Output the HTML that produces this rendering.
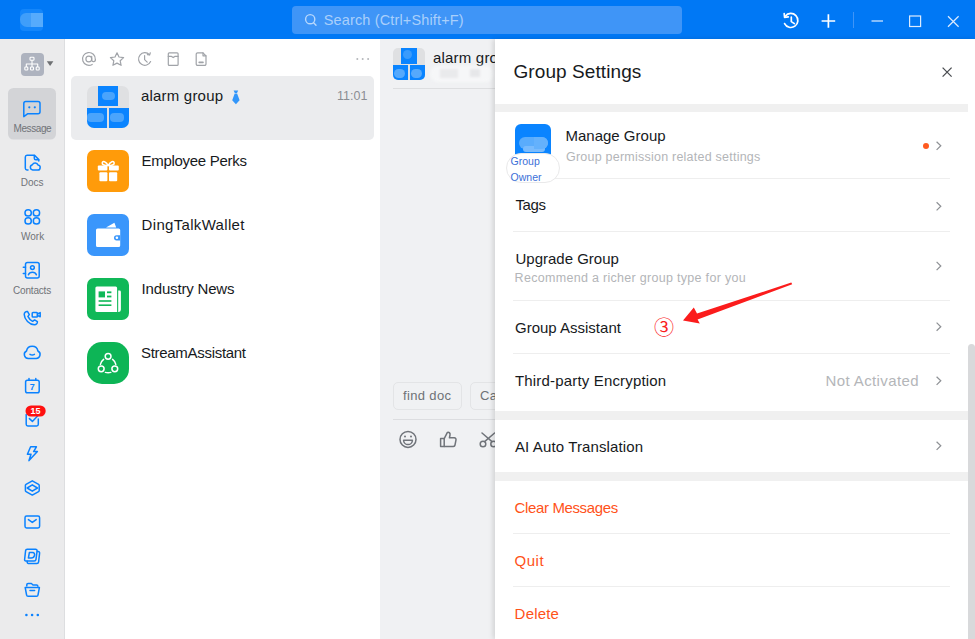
<!DOCTYPE html>
<html><head><meta charset="utf-8">
<style>
*{box-sizing:border-box;margin:0;padding:0}
html,body{width:975px;height:639px;overflow:hidden;background:#fff;font-family:"Liberation Sans","Noto Sans CJK SC",sans-serif;color:#171a1d}
.abs{position:absolute}
.t{position:absolute;white-space:nowrap;line-height:20px}
svg{position:absolute;overflow:visible}
#top{left:0;top:0;width:975px;height:39px;background:#0078f5}
#search{left:292px;top:6px;width:390px;height:28px;background:#3f95f7;border-radius:4px}
#side{left:0;top:39px;width:65px;height:600px;background:#ebebec;border-right:1px solid #dddee0}
#list{left:65px;top:39px;width:315px;height:600px;background:#fff}
#chat{left:380px;top:39px;width:115px;height:600px;background:#f0f1f3}
#drawer{left:495px;top:39px;width:480px;height:600px;background:#fff;box-shadow:-2px 0 5px rgba(0,0,0,.13)}
.nl{font-size:10px;color:#707378;line-height:12px}
.conv{font-size:15px;color:#171a1d}
.row{font-size:15px;color:#171a1d}
.sub{font-size:12.5px;color:#b3b5b8}
.div{left:513px;width:437px;height:1px;background:#eeeeee}
.band{left:495px;width:473px;background:#f0f0f0}
.red{color:#ff5219}
.av{position:absolute;left:87px;width:42px;height:42px;border-radius:7px}
.chev{stroke:#8e9195;stroke-width:1.2;fill:none}
.ic{stroke:#0a82ff;stroke-width:1.5;fill:none;stroke-linecap:round;stroke-linejoin:round}
.gi{stroke:#a0a3a8;stroke-width:1.2;fill:none;stroke-linecap:round;stroke-linejoin:round}
.ci{stroke:#70747a;stroke-width:1.5;fill:none;stroke-linecap:round;stroke-linejoin:round}
</style></head><body>
<div class="abs" id="top"></div>
<div class="abs" id="search"></div>
<div class="t" id="tsearch" style="left:323.7px;top:10px;font-size:14.5px;color:#a9cffb;letter-spacing:0.15px">Search (Ctrl+Shift+F)</div>
<div class="abs" id="side"></div>
<div class="abs" id="list"></div>
<div class="abs" id="chat"></div>
<!-- top bar icons -->
<div class="abs" style="left:20px;top:9px;width:23px;height:22px;border-radius:4px;background:#1486fa;overflow:hidden">
  <div class="abs" style="left:0;top:3.5px;width:23px;height:14px;border-radius:6px 0 0 7px;background:#3f9efa"></div>
  <div class="abs" style="left:11px;top:3.5px;width:12px;height:14px;background:#56abfc"></div>
</div>
<svg width="975" height="39" style="left:0;top:0" viewBox="0 0 975 39">
  <g stroke="#b9d8fc" fill="none" stroke-width="1.4" stroke-linecap="round">
    <circle cx="310.2" cy="19.2" r="4.6"/><path d="M313.6 22.8 L316 25.3"/>
  </g>
  <g stroke="#ffffff" fill="none" stroke-width="1.7" stroke-linecap="round" stroke-linejoin="round">
    <path d="M785.3 16.2 A7 7 0 1 1 784.6 23.6"/>
    <path d="M784.2 13.6 L784.6 17.3 L788.3 16.9"/>
    <path d="M791.3 17.2 V21.6 L794.4 23.6"/>
  </g>
  <g stroke="#ffffff" fill="none" stroke-width="1.7" stroke-linecap="butt">
    <path d="M821.6 21 H835.2 M828.4 14.3 V27.8"/>
  </g>
  <path d="M853.5 12 V28" stroke="#3f95f7" stroke-width="1"/>
  <g stroke="#dcebfe" fill="none" stroke-width="1.2">
    <path d="M871.5 21 H883"/>
    <rect x="909.6" y="16" width="11" height="10.5"/>
    <path d="M948 16.3 L958.6 26.7 M958.6 16.3 L948 26.7"/>
  </g>
</svg>

<!-- sidebar -->
<div class="abs" style="left:20.5px;top:52.8px;width:23px;height:23px;border-radius:4px;background:#aeb3bf"></div>
<svg width="65" height="600" style="left:0;top:39px" viewBox="0 39 65 600">
  <g stroke="#fff" fill="none" stroke-width="1.1" stroke-linejoin="round">
    <rect x="30" y="57.3" width="4" height="3" rx=".8"/>
    <path d="M32 60.3 V64 M26.3 67 V64 H37.7 V67 M32 64 V67"/>
    <rect x="24.8" y="67" width="3" height="3" rx=".8"/><rect x="30.5" y="67" width="3" height="3" rx=".8"/><rect x="36.2" y="67" width="3" height="3" rx=".8"/>
  </g>
  <path d="M46.8 61.3 H53.4 L50.1 66 Z" fill="#6e7073"/>
  <rect x="8" y="88" width="48" height="51.5" rx="5.5" fill="#d3d4d7"/>
  <!-- message -->
  <g class="ic">
    <path d="M25.8 101.6 H38 A2 2 0 0 1 40 103.6 V111.8 A2 2 0 0 1 38 113.8 H27.5 L23.8 116.6 V103.6 A2 2 0 0 1 25.8 101.6 Z"/>
  </g>
  <circle cx="29.3" cy="107.3" r="1.1" fill="#0a82ff"/><circle cx="34.8" cy="107.3" r="1.1" fill="#0a82ff"/>
  <!-- docs -->
  <g class="ic">
    <path d="M28 170 H27 A1.8 1.8 0 0 1 25.3 168.3 V157 A1.8 1.8 0 0 1 27 155.3 H34.5 L38.8 159.6 V161"/>
    <path d="M34.3 155.6 V158.2 A1.5 1.5 0 0 0 35.8 159.7 H38.6"/>
    <path d="M32.8 170 A2.7 2.7 0 0 1 32.4 164.7 A3 3 0 0 1 38 165 A2.5 2.5 0 0 1 37.3 170 Z"/>
  </g>
  <!-- work -->
  <g class="ic">
    <rect x="25" y="209.7" width="6.3" height="6.3" rx="3.1"/><rect x="33.3" y="209.7" width="6.3" height="6.3" rx="3.1"/>
    <rect x="25" y="217.8" width="6.3" height="6.3" rx="3.1"/><rect x="33.3" y="217.8" width="6.3" height="6.3" rx="3.1"/>
  </g>
  <!-- contacts -->
  <g class="ic">
    <rect x="25.5" y="262.5" width="13.7" height="15.5" rx="2"/>
    <path d="M23.3 267.2 H25.5 M23.3 273.4 H25.5"/>
    <circle cx="32.4" cy="267.6" r="1.9"/>
    <path d="M28.4 274.8 A4.2 3.6 0 0 1 36.4 274.8"/>
  </g>
  <!-- phone/video -->
  <g class="ic">
    <path d="M27.6 311.6 C26 311.2 24.2 312.4 24.2 314.4 C24.4 319.6 29.4 324.6 34.4 324.8 C36.4 324.8 37.6 323.2 37.4 321.6 L34.6 319.9 L32.6 321.3 C30.8 320.4 28.8 318.4 27.9 316.4 L29.3 314.6 Z"/>
    <rect x="32.2" y="312.4" width="5.2" height="4.6" rx=".8"/>
    <path d="M37.4 314 L40.2 312.6 V316.8 L37.4 315.4"/>
  </g>
  <!-- cloud face -->
  <g class="ic">
    <path d="M28.2 358.4 A3.9 3.9 0 0 1 26.5 351 A5.8 5.8 0 0 1 37.9 351 A3.9 3.9 0 0 1 36.2 358.4 Z"/>
    <path d="M30 354.3 Q32.2 355.6 34.4 354.3"/>
  </g>
  <!-- calendar -->
  <g class="ic">
    <rect x="25.6" y="380.2" width="13.6" height="12.6" rx="1.8"/>
    <path d="M29 378.6 V380.2 M35.8 378.6 V380.2"/>
  </g>
  <!-- todo -->
  <g class="ic">
    <path d="M38.3 419 V424.3 A1.6 1.6 0 0 1 36.7 425.9 H27.8 A1.6 1.6 0 0 1 26.2 424.3 V414.4"/>
    <path d="M29.4 418.6 L32.4 421.4 L38 415.6"/>
  </g>
  <!-- lightning -->
  <g class="ic">
    <path d="M30.6 446.8 H36.4 L33.6 451.6 H37.4 L29 460.6 L31 454.3 H27.4 Z"/>
  </g>
  <!-- hexagon -->
  <g class="ic">
    <path d="M32.3 480.8 L38.6 484.3 A1.2 1.2 0 0 1 39.2 485.3 V490.6 A1.2 1.2 0 0 1 38.6 491.6 L32.3 495.1 L26 491.6 A1.2 1.2 0 0 1 25.4 490.6 V485.3 A1.2 1.2 0 0 1 26 484.3 Z"/>
    <path d="M32.3 484.8 L37.4 488 L32.3 491.2 L27.2 488 Z"/>
  </g>
  <!-- mail -->
  <g class="ic">
    <rect x="25" y="516.1" width="14.6" height="11.8" rx="1.6"/>
    <path d="M28.4 519.6 L32.3 522.4 L36.2 519.6"/>
  </g>
  <!-- D -->
  <g class="ic" stroke-width="1.3">
    <path d="M27.2 549.2 H35.6 A1.5 1.5 0 0 1 37.1 550.9 L36 559.4 A1.8 1.8 0 0 1 34.2 561 H25.8 A1.3 1.3 0 0 1 24.6 559.5 L25.6 550.7 A1.7 1.7 0 0 1 27.2 549.2 Z"/>
    <path d="M37.4 551.6 H38.2 A1.4 1.4 0 0 1 39.6 553.2 L38.6 561.8 A1.8 1.8 0 0 1 36.8 563.4 H28.4 A1.3 1.3 0 0 1 27.2 562 V561.2"/>
    <path d="M29.4 552.4 H32.4 C34.6 552.4 34.8 554.2 34.5 555.4 C34.1 557.2 33 558 31.2 558 H28.4 Z"/>
  </g>
  <!-- folder -->
  <g class="ic">
    <path d="M26.8 586 V584.8 A1.3 1.3 0 0 1 28.1 583.5 H31.4 L33 585 H36.6 A1.3 1.3 0 0 1 37.9 586.2"/>
    <path d="M25.2 587.6 H39.4 L38 595 A1.5 1.5 0 0 1 36.5 596.3 H28.1 A1.5 1.5 0 0 1 26.6 595 Z"/>
    <path d="M30 590.6 H34.6"/>
  </g>
  <g fill="#0a82ff"><circle cx="26.4" cy="615" r="1.3"/><circle cx="32.1" cy="615" r="1.3"/><circle cx="37.8" cy="615" r="1.3"/></g>
  <rect x="25.5" y="405.5" width="20.2" height="11" rx="5.5" fill="#ff1010"/>
</svg>
<div class="t nl" id="n1" style="left:13.5px;top:122.5px;letter-spacing:-0.4px">Message</div>
<div class="t nl" id="n2" style="left:20.8px;top:176.5px">Docs</div>
<div class="t nl" id="n3" style="left:21px;top:230.5px">Work</div>
<div class="t nl" id="n4" style="left:13.1px;top:284.5px;letter-spacing:-0.2px">Contacts</div>
<div class="t" id="n7" style="left:29.7px;top:380.5px;font-size:9px;font-weight:bold;color:#0a82ff;line-height:12px">7</div>
<div class="t" id="n15" style="left:30.5px;top:405px;font-size:9px;font-weight:bold;color:#fff;line-height:12px">15</div>

<!-- conversation list -->
<svg width="315" height="40" style="left:65px;top:39px" viewBox="65 39 315 40">
  <g class="gi">
    <!-- @ -->
    <circle cx="88.8" cy="59" r="2.9"/>
    <path d="M91.7 56.3 V60.2 A1.7 1.7 0 0 0 95.3 59.4 A6.4 6.4 0 1 0 92.2 64.4"/>
    <!-- star -->
    <path d="M117 52.8 L119 57 L123.6 57.6 L120.2 60.8 L121.1 65.3 L117 63.1 L112.9 65.3 L113.8 60.8 L110.4 57.6 L115 57 Z"/>
    <!-- clock -->
    <path d="M149.4 54.6 A6.3 6.3 0 1 0 150.6 61.6"/>
    <path d="M150.3 52.8 L149.6 55 L147.4 54.6"/>
    <path d="M144.6 55.6 V59.6 L147.2 62.2"/>
    <!-- archive -->
    <rect x="168.3" y="52.8" width="9.8" height="12.6" rx="1"/>
    <path d="M168.3 56.4 H171.6 L173.2 57.6 L174.8 56.4 H178.1"/>
    <!-- file -->
    <path d="M197.6 52.8 H203 L206 55.8 V64 A1.4 1.4 0 0 1 204.6 65.4 H197.6 A1.4 1.4 0 0 1 196.2 64 V54.2 A1.4 1.4 0 0 1 197.6 52.8 Z"/>
    <path d="M203 52.8 V55.8 H206"/>
    <path d="M199.2 62.4 H203" stroke-width="1.6"/>
  </g>
  <g fill="#b4b6ba"><circle cx="357.3" cy="59" r="1"/><circle cx="362.7" cy="59" r="1"/><circle cx="368.1" cy="59" r="1"/></g>
</svg>
<div class="abs" style="left:71px;top:76px;width:303px;height:64px;background:#ebecee;border-radius:5px"></div>
<!-- avatars -->
<div class="av" style="top:86px;background:#dfe0e2;overflow:hidden">
  <div class="abs" style="left:10.8px;top:0;width:20.5px;height:20.3px;background:#0a84ff"></div>
  <div class="abs" style="left:0;top:21.7px;width:20.2px;height:20.3px;background:#0a84ff"></div>
  <div class="abs" style="left:21.7px;top:21.7px;width:20.3px;height:20.3px;background:#0a84ff"></div>
  <div class="abs" style="left:14.5px;top:5.5px;width:13.5px;height:8.5px;border-radius:4px;background:#4aa4fc"></div>
  <div class="abs" style="left:0;top:27px;width:17px;height:9px;border-radius:4px;background:#4aa4fc"></div>
  <div class="abs" style="left:23px;top:27px;width:14px;height:9px;border-radius:4px;background:#4aa4fc"></div>
</div>
<div class="av" style="top:150px;background:#ff9b0a"></div>
<div class="av" style="top:214px;background:#3a96fb"></div>
<div class="av" style="top:278px;background:#10b858"></div>
<div class="av" style="top:342px;background:#0db556;border-radius:15px"></div>
<svg width="42" height="300" style="left:87px;top:150px" viewBox="87 150 42 300">
  <!-- gift -->
  <g fill="#fff">
    <rect x="97.8" y="165.6" width="9.6" height="5" rx="1"/><rect x="109" y="165.6" width="9.8" height="5" rx="1"/>
    <rect x="99.4" y="172.2" width="8" height="9" rx="1"/><rect x="109" y="172.2" width="8.2" height="9" rx="1"/>
  </g>
  <g fill="none" stroke="#fff" stroke-width="1.5" stroke-linecap="round">
    <path d="M108.2 165.6 C106 161 102.6 160.6 102.2 163 C102 165 105 165.6 108.2 165.6 C111.4 165.6 114.4 165 114.2 163 C113.8 160.6 110.4 161 108.2 165.6"/>
  </g>
  <!-- wallet -->
  <g fill="#fff">
    <path d="M106 227.6 L114.4 222.8 L116.2 227.6 Z"/>
    <path d="M97.6 228.4 H118.6 A1.6 1.6 0 0 1 120.2 230 V245.4 A1.6 1.6 0 0 1 118.6 247 H97.6 A1.6 1.6 0 0 1 96 245.4 V230 A1.6 1.6 0 0 1 97.6 228.4 Z"/>
  </g>
  <path d="M120.2 235.2 H116.6 A2.6 2.6 0 0 0 116.6 240.4 H120.2 Z" fill="#3a96fb"/>
  <circle cx="116.9" cy="237.8" r="1.3" fill="#fff"/>
  <!-- news -->
  <g fill="#fff">
    <path d="M96.9 286.6 H115.6 A1.5 1.5 0 0 1 117.1 288.1 V311.9 H96.9 A1.5 1.5 0 0 1 95.4 310.4 V288.1 A1.5 1.5 0 0 1 96.9 286.6 Z"/>
    <path d="M118.2 290.6 H119.6 A1.3 1.3 0 0 1 120.9 291.9 V309.6 A2.3 2.3 0 0 1 118.2 311.9 Z"/>
  </g>
  <g fill="#10b858">
    <rect x="98.6" y="291.4" width="6.4" height="6" />
    <rect x="107" y="291.4" width="4.4" height="1.8"/><rect x="107" y="295.6" width="4.4" height="1.8"/>
    <rect x="98.6" y="300.2" width="12.8" height="1.6"/><rect x="98.6" y="304.4" width="12.8" height="1.6"/>
  </g>
  <!-- stream -->
  <g fill="none" stroke="#fff" stroke-width="1.5" stroke-linecap="round">
    <circle cx="108.1" cy="356.3" r="2.9"/><circle cx="101.2" cy="368.8" r="2.9"/><circle cx="114.8" cy="368.8" r="2.9"/>
    <path d="M103.6 359.4 A8.6 8.6 0 0 0 100.4 364.4"/>
    <path d="M112.6 359.4 A8.6 8.6 0 0 1 115.8 364.4"/>
    <path d="M105.4 372.4 A8.6 8.6 0 0 0 110.8 372.4"/>
  </g>
</svg>
<div class="t conv" id="c1" style="left:141px;top:86.2px;letter-spacing:0.2px">alarm group</div>
<svg width="10" height="15" style="left:231px;top:90px" viewBox="231 90 10 15">
  <path d="M233.6 90.4 H238.2 L237 93 H234.8 Z M234.7 93.6 H237.1 L239.6 100.2 L235.9 104.2 L232.2 100.2 Z" fill="#3296fa"/>
</svg>
<div class="t conv" id="c2" style="left:141.6px;top:150.5px;letter-spacing:-0.3px">Employee Perks</div>
<div class="t conv" id="c3" style="left:141.6px;top:214.7px;letter-spacing:0.32px">DingTalkWallet</div>
<div class="t conv" id="c4" style="left:141.6px;top:278.8px;letter-spacing:-0.18px">Industry News</div>
<div class="t conv" id="c5" style="left:141px;top:342.6px;letter-spacing:-0.3px">StreamAssistant</div>
<div class="t" id="ctime" style="left:337px;top:86px;font-size:12.5px;color:#8b8e93">11:01</div>

<!-- chat -->
<div class="abs" style="left:393px;top:48px;width:32px;height:32px;border-radius:5px;background:#dfe0e2;overflow:hidden">
  <div class="abs" style="left:8px;top:0;width:15.6px;height:15.5px;background:#0a84ff"></div>
  <div class="abs" style="left:0;top:16.6px;width:15.4px;height:15.4px;background:#0a84ff"></div>
  <div class="abs" style="left:16.6px;top:16.6px;width:15.4px;height:15.4px;background:#0a84ff"></div>
  <div class="abs" style="left:10px;top:2px;width:9px;height:9px;border-radius:5px;background:#3a9bfc"></div>
  <div class="abs" style="left:1px;top:21px;width:11px;height:9px;border-radius:5px;background:#55a9fc"></div>
  <div class="abs" style="left:18px;top:21px;width:11px;height:9px;border-radius:5px;background:#55a9fc"></div>
</div>
<div class="abs" style="left:380px;top:39px;width:115px;height:60px;overflow:hidden">
  <div class="t conv" id="ch1" style="left:53px;top:8.5px;letter-spacing:0.2px">alarm group</div>
  <div class="abs" style="left:50px;top:27px;width:64px;height:16px;border-radius:8px;background:#f6f7f8;filter:blur(1.5px)"></div>
  <div class="abs" style="left:60px;top:30px;width:18px;height:9px;background:#e9eaec;filter:blur(1px)"></div>
  <div class="abs" style="left:90px;top:30px;width:10px;height:8px;background:#e6e7e9;filter:blur(1px)"></div>
</div>
<div class="abs" style="left:393px;top:88px;width:102px;height:1px;background:#dddee0"></div>
<div class="abs" style="left:393px;top:382px;width:69px;height:27.5px;border:1px solid #e3e4e6;border-radius:5px"></div>
<div class="abs" style="left:470px;top:382px;width:40px;height:27.5px;border:1px solid #e3e4e6;border-radius:5px"></div>
<div class="abs" style="left:380px;top:380px;width:115px;height:40px;overflow:hidden">
  <div class="t" id="ch2" style="left:23px;top:6px;font-size:13px;color:#6e7276;letter-spacing:0.35px">find doc</div>
  <div class="t" id="ch3" style="left:100px;top:6px;font-size:13px;color:#6e7276;letter-spacing:0.35px">Cancel</div>
</div>
<div class="abs" style="left:393px;top:419px;width:102px;height:1px;background:#dcdde0"></div>
<svg width="115" height="30" style="left:380px;top:425px" viewBox="380 425 115 30">
  <g class="ci">
    <circle cx="408" cy="439.4" r="8"/>
    <path d="M403.6 440.2 H412.4 A4.4 4.4 0 0 1 403.6 440.2 Z"/>
  </g>
  <circle cx="405" cy="436.4" r="1" fill="#70747a"/><circle cx="411" cy="436.4" r="1" fill="#70747a"/>
  <g class="ci">
    <path d="M440.6 438.6 H444.2 V446.4 H440.6 Z"/>
    <path d="M444.2 438.6 L447.4 432.4 C449.2 431.8 450.4 433.4 450 435 L449.4 437.8 H454.4 A1.7 1.7 0 0 1 456 439.8 L455 445 A1.7 1.7 0 0 1 453.4 446.4 H444.2"/>
    <circle cx="483" cy="444" r="2.8"/><circle cx="493.6" cy="444" r="2.8"/>
    <path d="M484.6 441.6 L494.6 433 M492 441.6 L482 433"/>
  </g>
</svg>

<!-- drawer -->
<div class="abs" id="drawer"></div>
<div class="t" id="d0" style="left:513.5px;top:60px;font-size:19px;line-height:24px;letter-spacing:0.08px">Group Settings</div>
<div class="abs band" style="top:104px;height:8px"></div>
<div class="abs" style="left:515px;top:124px;width:36px;height:36px;border-radius:6px;background:#0a84ff;overflow:hidden">
  <div class="abs" style="left:4px;top:13px;width:29px;height:12px;border-radius:6px;background:#5aacfc"></div>
  <div class="abs" style="left:8px;top:22px;width:22px;height:6px;border-radius:3px;background:#79bbfd"></div>
  <div class="abs" style="left:19px;top:13px;width:14px;height:12px;border-radius:0 6px 6px 0;background:#64b1fc"></div>
</div>
<div class="abs div" style="top:178px"></div>
<div class="abs" style="left:506px;top:152.5px;width:54px;height:30.5px;border-radius:15px;background:#fff;border:1px solid #e9e9ea"></div>
<div class="t" id="go1" style="left:510.6px;top:154px;font-size:10.5px;line-height:15px;color:#3c6fd8">Group</div>
<div class="t" id="go2" style="left:510.6px;top:169.8px;font-size:10.5px;line-height:15px;color:#3c6fd8">Owner</div>
<div class="t row" id="d1" style="left:565.5px;top:126.3px">Manage Group</div>
<div class="t sub" id="d2" style="left:566px;top:146.8px;letter-spacing:0.23px">Group permission related settings</div>
<div class="abs" style="left:922.5px;top:143px;width:6px;height:6px;border-radius:3px;background:#ff5a1f"></div>
<div class="t row" id="d3" style="left:515.5px;top:195.2px;letter-spacing:-0.4px">Tags</div>
<div class="abs div" style="top:231px"></div>
<div class="t row" id="d4" style="left:515.5px;top:249.1px">Upgrade Group</div>
<div class="t sub" id="d5" style="left:514.6px;top:267.5px;letter-spacing:0.3px">Recommend a richer group type for you</div>
<div class="abs div" style="top:300px"></div>
<div class="t row" id="d6" style="left:515px;top:317.7px">Group Assistant</div>
<div class="t" id="d6n" style="left:654px;top:312px;font-size:20px;line-height:30px;color:#fa1e1e;font-family:'Noto Sans CJK SC',sans-serif">③</div>
<div class="abs div" style="top:353px"></div>
<div class="t row" id="d7" style="left:515px;top:370.6px;letter-spacing:0.17px">Third-party Encryption</div>
<div class="t row" id="d7b" style="left:825.6px;top:370.6px;color:#b4b6b9;letter-spacing:0.38px">Not Activated</div>
<div class="abs band" style="top:411px;height:9px"></div>
<div class="t row" id="d8" style="left:515px;top:436.8px;letter-spacing:0.12px">AI Auto Translation</div>
<div class="abs band" style="top:472px;height:9px"></div>
<div class="t row red" id="d9" style="left:514.6px;top:497.6px;letter-spacing:-0.37px">Clear Messages</div>
<div class="abs div" style="top:533px"></div>
<div class="t row red" id="d10" style="left:514.6px;top:550.6px;letter-spacing:0.5px">Quit</div>
<div class="abs div" style="top:586px"></div>
<div class="t row red" id="d11" style="left:514.6px;top:603.6px;letter-spacing:0.2px">Delete</div>
<div class="abs" style="left:968px;top:344px;width:7px;height:300px;border-radius:4px 4px 0 0;background:#d8d9db"></div>
<svg width="480" height="600" style="left:495px;top:39px" viewBox="495 39 480 600">
  <path d="M942.6 67.6 L951.6 76.6 M951.6 67.6 L942.6 76.6" stroke="#4b4e52" stroke-width="1.3" fill="none"/>
  <g class="chev">
    <path d="M936.6 141.7 L940.8 145.8 L936.6 149.9"/>
    <path d="M936.6 202.2 L940.8 206.3 L936.6 210.4"/>
    <path d="M936.6 261.9 L940.8 266 L936.6 270.1"/>
    <path d="M936.6 322.6 L940.8 326.7 L936.6 330.8"/>
    <path d="M936.6 376.7 L940.8 380.8 L936.6 384.9"/>
    <path d="M936.6 441.7 L940.8 445.8 L936.6 449.9"/>
  </g>
  <!-- red arrow -->
  <path d="M791.3 282.6 L792.2 284.2 L697.6 319.4 L699.8 323.4 L683 320.4 L693.8 307.4 L697 313.6 Z" fill="#fb1c1c"/>
</svg>

</body></html>
